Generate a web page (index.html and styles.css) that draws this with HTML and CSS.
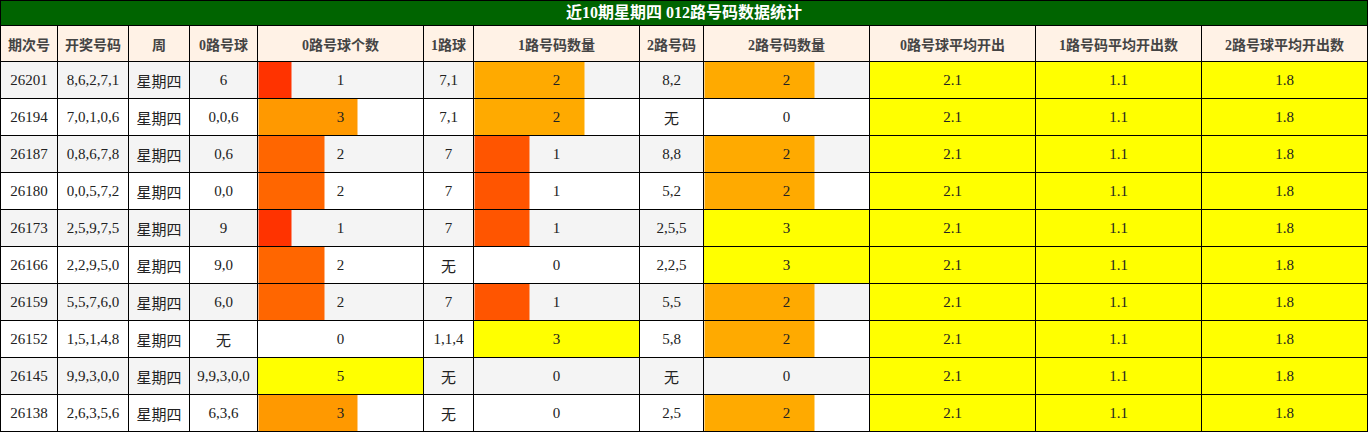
FILE: index.html
```html
<!DOCTYPE html>
<html lang="zh-CN">
<head>
<meta charset="utf-8">
<title>近10期星期四 012路号码数据统计</title>
<link rel="stylesheet" href="styles.css">
</head>
<body>
<table class="stats">
  <colgroup>
    <col class="w57"><col class="w71"><col class="w61"><col class="w68"><col class="w166"><col class="w50"><col class="w166"><col class="w64"><col class="w166"><col class="w166"><col class="w166"><col class="w166">
  </colgroup>
  <thead>
    <tr class="title-row"><th colspan="12">近10期星期四 012路号码数据统计</th></tr>
    <tr class="head-row">
      <th>期次号</th><th>开奖号码</th><th>周</th><th>0路号球</th><th>0路号球个数</th><th>1路球</th><th>1路号码数量</th><th>2路号码</th><th>2路号码数量</th><th>0路号球平均开出</th><th>1路号码平均开出数</th><th>2路号球平均开出数</th>
    </tr>
  </thead>
  <tbody>
    <tr class="odd">
      <td>26201</td><td>8,6,2,7,1</td><td>星期四</td><td>6</td>
      <td class="bar" style="--p:20%;--c:#ff3300">1</td><td>7,1</td>
      <td class="bar" style="--p:66.67%;--c:#ffaa00">2</td><td>8,2</td>
      <td class="bar" style="--p:66.67%;--c:#ffaa00">2</td>
      <td class="avg">2.1</td><td class="avg">1.1</td><td class="avg">1.8</td>
    </tr>
    <tr>
      <td>26194</td><td>7,0,1,0,6</td><td>星期四</td><td>0,0,6</td>
      <td class="bar" style="--p:60%;--c:#ff9900">3</td><td>7,1</td>
      <td class="bar" style="--p:66.67%;--c:#ffaa00">2</td><td>无</td>
      <td>0</td>
      <td class="avg">2.1</td><td class="avg">1.1</td><td class="avg">1.8</td>
    </tr>
    <tr class="odd">
      <td>26187</td><td>0,8,6,7,8</td><td>星期四</td><td>0,6</td>
      <td class="bar" style="--p:40%;--c:#ff6600">2</td><td>7</td>
      <td class="bar" style="--p:33.33%;--c:#ff5500">1</td><td>8,8</td>
      <td class="bar" style="--p:66.67%;--c:#ffaa00">2</td>
      <td class="avg">2.1</td><td class="avg">1.1</td><td class="avg">1.8</td>
    </tr>
    <tr>
      <td>26180</td><td>0,0,5,7,2</td><td>星期四</td><td>0,0</td>
      <td class="bar" style="--p:40%;--c:#ff6600">2</td><td>7</td>
      <td class="bar" style="--p:33.33%;--c:#ff5500">1</td><td>5,2</td>
      <td class="bar" style="--p:66.67%;--c:#ffaa00">2</td>
      <td class="avg">2.1</td><td class="avg">1.1</td><td class="avg">1.8</td>
    </tr>
    <tr class="odd">
      <td>26173</td><td>2,5,9,7,5</td><td>星期四</td><td>9</td>
      <td class="bar" style="--p:20%;--c:#ff3300">1</td><td>7</td>
      <td class="bar" style="--p:33.33%;--c:#ff5500">1</td><td>2,5,5</td>
      <td class="bar" style="--p:100%;--c:#ffff00">3</td>
      <td class="avg">2.1</td><td class="avg">1.1</td><td class="avg">1.8</td>
    </tr>
    <tr>
      <td>26166</td><td>2,2,9,5,0</td><td>星期四</td><td>9,0</td>
      <td class="bar" style="--p:40%;--c:#ff6600">2</td><td>无</td>
      <td>0</td><td>2,2,5</td>
      <td class="bar" style="--p:100%;--c:#ffff00">3</td>
      <td class="avg">2.1</td><td class="avg">1.1</td><td class="avg">1.8</td>
    </tr>
    <tr class="odd">
      <td>26159</td><td>5,5,7,6,0</td><td>星期四</td><td>6,0</td>
      <td class="bar" style="--p:40%;--c:#ff6600">2</td><td>7</td>
      <td class="bar" style="--p:33.33%;--c:#ff5500">1</td><td>5,5</td>
      <td class="bar" style="--p:66.67%;--c:#ffaa00">2</td>
      <td class="avg">2.1</td><td class="avg">1.1</td><td class="avg">1.8</td>
    </tr>
    <tr>
      <td>26152</td><td>1,5,1,4,8</td><td>星期四</td><td>无</td>
      <td>0</td><td>1,1,4</td>
      <td class="bar" style="--p:100%;--c:#ffff00">3</td><td>5,8</td>
      <td class="bar" style="--p:66.67%;--c:#ffaa00">2</td>
      <td class="avg">2.1</td><td class="avg">1.1</td><td class="avg">1.8</td>
    </tr>
    <tr class="odd">
      <td>26145</td><td>9,9,3,0,0</td><td>星期四</td><td>9,9,3,0,0</td>
      <td class="bar" style="--p:100%;--c:#ffff00">5</td><td>无</td>
      <td>0</td><td>无</td>
      <td>0</td>
      <td class="avg">2.1</td><td class="avg">1.1</td><td class="avg">1.8</td>
    </tr>
    <tr>
      <td>26138</td><td>2,6,3,5,6</td><td>星期四</td><td>6,3,6</td>
      <td class="bar" style="--p:60%;--c:#ff9900">3</td><td>无</td>
      <td>0</td><td>2,5</td>
      <td class="bar" style="--p:66.67%;--c:#ffaa00">2</td>
      <td class="avg">2.1</td><td class="avg">1.1</td><td class="avg">1.8</td>
    </tr>
  </tbody>
</table>
</body>
</html>
```

FILE: styles.css
```css
html, body {
  margin: 0;
  padding: 0;
  background: #ffffff;
}

.stats {
  width: 1368px;
  table-layout: fixed;
  border-collapse: collapse;
  font-family: "Liberation Serif", "Noto Sans CJK SC", serif;
  font-size: 15px;
  color: #222222;
}

.w57 { width: 57px; }
.w71 { width: 71px; }
.w61 { width: 61px; }
.w68 { width: 68px; }
.w166 { width: 166px; }
.w50 { width: 50px; }
.w64 { width: 64px; }

.stats th,
.stats td {
  border: 1px solid #000000;
  padding: 0;
  text-align: center;
  vertical-align: middle;
  white-space: nowrap;
  overflow: hidden;
}

.title-row th {
  height: 24px;
  background: #006400;
  color: #ffffff;
  font-size: 16px;
  font-weight: bold;
  line-height: 24px;
}

.head-row th {
  height: 35px;
  background: #fff2e6;
  color: #444444;
  font-size: 14px;
  font-weight: bold;
}

.stats tbody td {
  height: 36px;
  background-color: #ffffff;
}

.stats tbody tr.odd td {
  background-color: #f4f4f4;
}

.stats tbody td.bar {
  background-image: linear-gradient(to right, var(--c) 0, var(--c) var(--p), transparent var(--p));
}

.stats tbody td.avg,
.stats tbody tr.odd td.avg {
  background-color: #ffff00;
}
```
